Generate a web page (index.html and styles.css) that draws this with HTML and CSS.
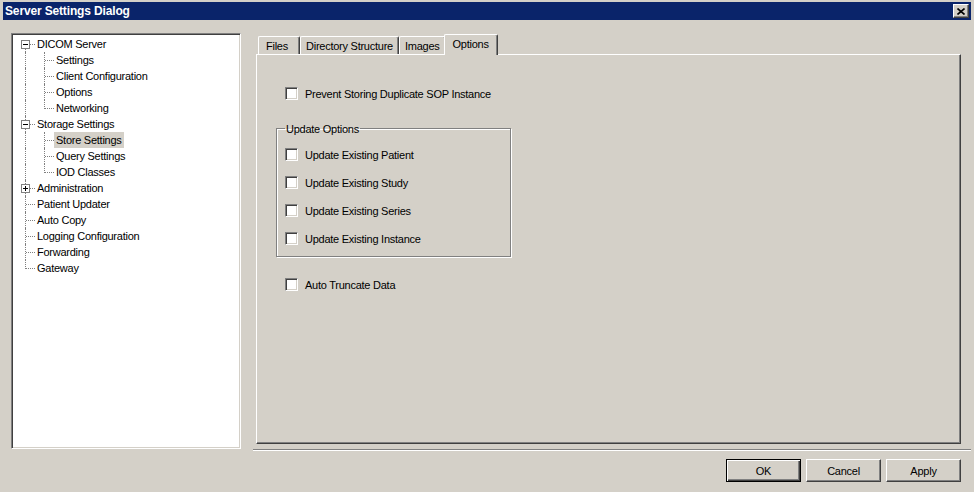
FILE: index.html
```html
<!DOCTYPE html>
<html lang="en">
<head>
    <meta charset="UTF-8">
    <meta name="viewport" content="width=device-width, initial-scale=1.0">
    <title>Server Settings Dialog</title>
    <link rel="stylesheet" href="styles.css">
</head>
<body>

    <div class="window">
        <div class="titlebar">
            <span class="title">Server Settings Dialog</span>
            <button class="close-btn" type="button">
                <svg width="8" height="7" viewBox="0 0 8 7"><path d="M0.5 0.5 L7.5 6.5 M7.5 0.5 L0.5 6.5" stroke="#000" stroke-width="1.6" fill="none"/></svg>
            </button>
        </div>

        <div class="dialog-body">
            <div class="tree">
                <div class="tree-row"><span class="cell first"><span class="expander"></span></span><span class="label">DICOM Server</span></div>
                <div class="tree-row"><span class="cell pipe"></span><span class="cell tee"></span><span class="label">Settings</span></div>
                <div class="tree-row"><span class="cell pipe"></span><span class="cell tee"></span><span class="label">Client Configuration</span></div>
                <div class="tree-row"><span class="cell pipe"></span><span class="cell tee"></span><span class="label">Options</span></div>
                <div class="tree-row"><span class="cell pipe"></span><span class="cell end"></span><span class="label">Networking</span></div>
                <div class="tree-row"><span class="cell tee"><span class="expander"></span></span><span class="label">Storage Settings</span></div>
                <div class="tree-row"><span class="cell pipe"></span><span class="cell tee"></span><span class="label selected">Store Settings</span></div>
                <div class="tree-row"><span class="cell pipe"></span><span class="cell tee"></span><span class="label">Query Settings</span></div>
                <div class="tree-row"><span class="cell pipe"></span><span class="cell end"></span><span class="label">IOD Classes</span></div>
                <div class="tree-row"><span class="cell tee"><span class="expander plus"></span></span><span class="label">Administration</span></div>
                <div class="tree-row"><span class="cell tee"></span><span class="label">Patient Updater</span></div>
                <div class="tree-row"><span class="cell tee"></span><span class="label">Auto Copy</span></div>
                <div class="tree-row"><span class="cell tee"></span><span class="label">Logging Configuration</span></div>
                <div class="tree-row"><span class="cell tee"></span><span class="label">Forwarding</span></div>
                <div class="tree-row"><span class="cell end"></span><span class="label">Gateway</span></div>
            </div>

            <div class="main">
                <div class="tabs">
                    <div class="tab">Files</div>
                    <div class="tab">Directory Structure</div>
                    <div class="tab">Images</div>
                    <div class="tab active">Options</div>
                </div>

                <div class="panel">
                    <div class="check"><span class="box"></span><span>Prevent Storing Duplicate SOP Instance</span></div>

                    <fieldset class="group">
                        <legend>Update Options</legend>
                        <div class="check"><span class="box"></span><span>Update Existing Patient</span></div>
                        <div class="check"><span class="box"></span><span>Update Existing Study</span></div>
                        <div class="check"><span class="box"></span><span>Update Existing Series</span></div>
                        <div class="check"><span class="box"></span><span>Update Existing Instance</span></div>
                    </fieldset>

                    <div class="check truncate"><span class="box"></span><span>Auto Truncate Data</span></div>
                </div>

                <div class="separator"></div>

                <div class="buttons">
                    <button class="btn default" type="button">OK</button>
                    <button class="btn" type="button">Cancel</button>
                    <button class="btn" type="button">Apply</button>
                </div>
            </div>
        </div>
    </div>

</body>
</html>
```

FILE: styles.css
```css
body {
    margin: 0;
    padding: 0;
    background-color: #d4d0c8;
    font-family: "Liberation Sans", Arial, sans-serif;
    font-size: 11px;
    letter-spacing: -0.25px;
    color: #000;
}
.window {
    width: 974px;
    height: 492px;
    box-sizing: border-box;
    padding-top: 2px;
    background-color: #d4d0c8;
    overflow: hidden;
}
.titlebar {
    display: flex;
    align-items: center;
    justify-content: space-between;
    height: 18px;
    margin: 0 3px;
    padding: 0 2px 0 2px;
    background-color: #0a246a;
}
.title {
    color: #fff;
    font-weight: bold;
    font-size: 12px;
    letter-spacing: -0.15px;
}
.close-btn {
    display: flex;
    align-items: center;
    justify-content: center;
    width: 16px;
    height: 14px;
    padding: 0;
    background-color: #d4d0c8;
    border: 1px solid;
    border-color: #fff #404040 #404040 #fff;
    box-shadow: inset -1px -1px #808080;
}

.dialog-body {
    display: flex;
    padding: 13px 0 0 11px;
}

/* tree */
.tree {
    width: 230px;
    height: 416px;
    box-sizing: border-box;
    padding: 2px 0 0 4px;
    background-color: #fff;
    border: 1px solid;
    border-color: #808080 #fff #fff #808080;
    box-shadow: inset 1px 1px #404040, inset -1px -1px #d4d0c8;
}
.tree-row {
    display: flex;
    height: 16px;
}
.cell {
    position: relative;
    flex: none;
    width: 19px;
    height: 16px;
}
.cell::before, .cell::after {
    content: "";
    position: absolute;
}
.pipe::before, .tee::before {
    left: 9px;
    top: 0;
    bottom: 0;
    border-left: 1px dotted #808080;
}
.end::before {
    left: 9px;
    top: 0;
    height: 9px;
    border-left: 1px dotted #808080;
}
.first::before {
    left: 9px;
    top: 8px;
    bottom: 0;
    border-left: 1px dotted #808080;
}
.tee::after, .end::after, .first::after {
    left: 10px;
    right: 0;
    top: 8px;
    border-top: 1px dotted #808080;
}
.expander {
    position: absolute;
    left: 5px;
    top: 4px;
    width: 7px;
    height: 7px;
    border: 1px solid #808080;
    background-color: #fff;
    z-index: 1;
}
.expander::before {
    content: "";
    position: absolute;
    left: 1px;
    top: 3px;
    width: 5px;
    height: 1px;
    background-color: #000;
}
.expander.plus::after {
    content: "";
    position: absolute;
    left: 3px;
    top: 1px;
    width: 1px;
    height: 5px;
    background-color: #000;
}
.label {
    padding: 0 2px;
    line-height: 17px;
    white-space: nowrap;
}
.label.selected {
    background-color: #d4d0c8;
}

/* right side */
.main {
    display: flex;
    flex-direction: column;
    width: 718px;
    margin-left: 12px;
    padding-top: 1px;
}
.tabs {
    display: flex;
    align-items: flex-end;
    padding-left: 5px;
}
.tab {
    display: flex;
    align-items: center;
    min-width: 42px;
    height: 18px;
    box-sizing: border-box;
    padding: 0 5px 0 5px;
    border-top: 1px solid #fff;
    border-left: 1px solid #fff;
    border-right: 1px solid #404040;
    border-radius: 2px 2px 0 0;
    box-shadow: inset -1px 0 #808080;
    white-space: nowrap;
}
.tab:first-child {
    padding-left: 7px;
}
.tab.active {
    position: relative;
    z-index: 1;
    height: 21px;
    margin: 0 -2px -1px -2px;
    padding: 0 8px 2px 8px;
    background-color: #d4d0c8;
}
.panel {
    width: 705px;
    height: 390px;
    box-sizing: border-box;
    margin-left: 3px;
    padding: 32px 0 0 19px;
    border: 1px solid;
    border-color: #fff #404040 #404040 #fff;
    box-shadow: inset -1px -1px #808080;
}
.check {
    display: flex;
    align-items: center;
    height: 13px;
    margin-left: 9px;
    white-space: nowrap;
}
.box {
    width: 13px;
    height: 13px;
    box-sizing: border-box;
    margin-right: 7px;
    background-color: #fff;
    border: 1px solid;
    border-color: #808080 #fff #fff #808080;
    box-shadow: inset 1px 1px #404040, inset -1px -1px #d4d0c8;
}
.group {
    width: 235px;
    box-sizing: border-box;
    margin: 22px 0 0 0;
    padding: 0 0 11px 8px;
    border: 1px solid #808080;
    box-shadow: inset 1px 1px #fff, 1px 1px #fff;
}
.group legend {
    position: relative;
    top: 1px;
    padding: 0 1px;
    margin-left: 0;
    line-height: 13px;
}
.group .check {
    margin: 15px 0 0 0;
}
.group .check:first-of-type {
    margin-top: 13px;
}
.check.truncate {
    margin-top: 21px;
}
.separator {
    margin-top: 5px;
    border-top: 1px solid #808080;
    border-bottom: 1px solid #fff;
}
.buttons {
    display: flex;
    justify-content: flex-end;
    gap: 5px;
    margin-top: 8px;
    padding-right: 10px;
}
.btn {
    width: 75px;
    height: 23px;
    padding: 0;
    font-family: "Liberation Sans", Arial, sans-serif;
    font-size: 11px;
    letter-spacing: -0.25px;
    color: #000;
    background-color: #d4d0c8;
    border: 1px solid;
    border-color: #fff #404040 #404040 #fff;
    box-shadow: inset -1px -1px #808080;
}
.btn.default {
    border-color: #000;
    box-shadow: inset 1px 1px #fff, inset -1px -1px #404040, inset -2px -2px #808080;
}
```
